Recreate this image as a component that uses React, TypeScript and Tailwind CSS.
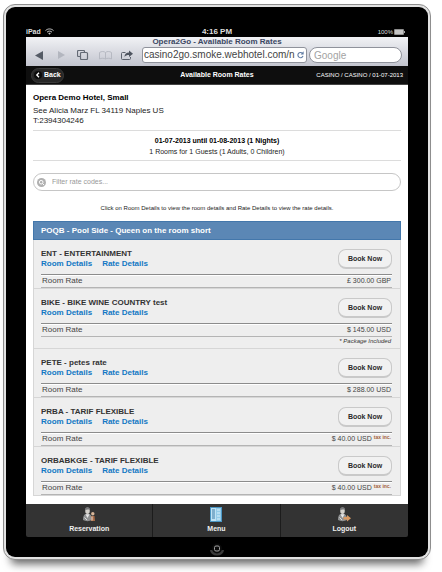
import React from "react";

type Rate = {
  code: string;
  price: string;
  taxIncluded?: boolean;
  note?: string;
};

const rates: Rate[] = [
  { code: "ENT - ENTERTAINMENT", price: "£ 300.00 GBP" },
  { code: "BIKE - BIKE WINE COUNTRY test", price: "$ 145.00 USD", note: "* Package Included" },
  { code: "PETE - petes rate", price: "$ 288.00 USD" },
  { code: "PRBA - TARIF FLEXIBLE", price: "$ 40.00 USD", taxIncluded: true },
  { code: "ORBABKGE - TARIF FLEXIBLE", price: "$ 40.00 USD", taxIncluded: true },
];

function WifiIcon() {
  return (
    <svg width="9" height="7" viewBox="0 0 18 14" fill="none" stroke="#c9c9c9" strokeWidth="2">
      <path d="M1 5.2C5.5.8 12.500.8 17 5.2" />
      <path d="M4 8.400c2.800-2.800 7.200-2.800 10 0" />
      <path d="M6.500 10.600c1.500-1.200 3.500-1.200 5 0L9 13.400z" fill="#c9c9c9" stroke="none" />
    </svg>
  );
}

function BatteryIcon() {
  return (
    <svg width="11" height="6" viewBox="0 0 11 6">
      <rect x="0" y="0" width="10" height="6" rx="1" fill="#8d8d8d" />
      <rect x="1" y="1" width="8" height="4" fill="#c4c4c4" />
      <rect x="10" y="2" width="1" height="2" fill="#a5a5a5" />
    </svg>
  );
}

function StatusBar() {
  return (
    <div className="grid h-[13px] grid-cols-3 items-center pt-[2px] text-[8px] leading-[10px] text-[#dedede]">
      <div className="flex items-center gap-1 text-[7px] font-bold">
        <span>iPad</span>
        <WifiIcon />
      </div>
      <div className="text-center font-bold">4:16 PM</div>
      <div className="flex items-center justify-end gap-px pr-[3px] text-[6px]">
        <span>100%</span>
        <BatteryIcon />
      </div>
    </div>
  );
}

const toolButton = "flex h-4 w-[22px] items-center justify-center";

function BrowserBar() {
  return (
    <div className="h-[29px] bg-linear-to-b from-[#f1f2f5] to-[#c3c5cf]">
      <div className="text-center text-[8px] leading-[10px] font-bold text-[#3b4763]">
        Opera2Go - Available Room Rates
      </div>
      <div className="flex items-center pr-[6px] pl-[2px]">
        <div className="flex w-[114px] shrink-0">
          <button type="button" aria-label="Go back" className={toolButton}>
            <svg width="8" height="9" viewBox="0 0 8 9">
              <path d="M8 0v9L0 4.500z" fill="#555b66" />
            </svg>
          </button>
          <button type="button" aria-label="Go forward" className={toolButton}>
            <svg width="7" height="8" viewBox="0 0 7 8">
              <path d="M0 0v8l7-4z" fill="#b3b6bf" />
            </svg>
          </button>
          <button type="button" aria-label="Pages" className={toolButton}>
            <svg width="12" height="10" viewBox="0 0 12 10" fill="none" stroke="#646a75">
              <path d="M3 6.500H1.500a1 1 0 0 1-1-1v-4a1 1 0 0 1 1-1h5a1 1 0 0 1 1 1V2" strokeWidth="1.200" />
              <rect x="3.500" y="2.500" width="7" height="7" rx="1" strokeWidth="1.200" />
            </svg>
          </button>
          <button type="button" aria-label="Bookmarks" className={toolButton}>
            <svg width="13" height="9" viewBox="0 0 13 9" fill="none" stroke="#b6b9c2">
              <path d="M.5 8V1.500C2.500.2 5 .2 6.500 1.500 8 .2 10.500.2 12.500 1.500V8C10.500 7 8 7 6.500 8 5 7 2.500 7 .5 8zM6.500 1.500V8" />
            </svg>
          </button>
          <button type="button" aria-label="Share" className={toolButton}>
            <svg width="12" height="10" viewBox="0 0 12 10">
              <path d="M4.500 2.500h-3a1 1 0 0 0-1 1v5a1 1 0 0 0 1 1h7a1 1 0 0 0 1-1V7" fill="none" stroke="#5b616c" />
              <path d="M3.500 7C3.500 4 5 2.500 8 2.500V.5L12 3.700 8 7V5C6 5 4.500 5.500 3.500 7z" fill="#4e545f" />
            </svg>
          </button>
        </div>
        <div className="grid min-w-0 flex-1 grid-cols-[165fr_93fr] gap-[2px]">
          <div className="flex h-4 min-w-0 items-center rounded-[3px] border border-[#8f929b] bg-white pr-[2px] pl-px">
            <input
              type="text"
              aria-label="Address"
              defaultValue="casino2go.smoke.webhotel.com/n"
              className="h-3 min-w-0 flex-1 bg-transparent text-[10px] leading-3 text-[#444444] outline-none"
            />
            <button type="button" aria-label="Reload">
              <svg width="7" height="8" viewBox="0 0 7 8">
                <path d="M5.500 2.400A2.600 2.600 0 1 0 6 4.800" fill="none" stroke="#5e7ba3" strokeWidth="1.100" />
                <path d="M6.600.3v3.100H3.600z" fill="#5e7ba3" />
              </svg>
            </button>
          </div>
          <input
            type="search"
            aria-label="Search the web"
            placeholder="Google"
            className="h-4 w-full min-w-0 rounded-full border border-[#8f929b] bg-white pr-1 pl-[4px] text-[10px] leading-3 outline-none placeholder:text-[#a3a3a3]"
          />
        </div>
      </div>
    </div>
  );
}

function AppHeader() {
  return (
    <header className="grid h-[19px] grid-cols-[1fr_auto_1fr] items-center border-b border-[#444444] bg-[#0e0e0e] px-[5px] text-white">
      <button
        type="button"
        className="flex h-[15px] w-[33px] items-center gap-[2px] rounded-full border border-[#3a3a3a] bg-[#272727] pl-[2px] text-[7px] leading-[10px] font-bold"
      >
        <svg width="8" height="8" viewBox="0 0 8 8">
          <circle cx="4" cy="4" r="4" fill="#0b0b0b" />
          <path d="M5 1.800 2.800 4 5 6.200" fill="none" stroke="#ffffff" strokeWidth="1.300" />
        </svg>
        Back
      </button>
      <h1 className="text-[7px] leading-[10px] font-bold">Available Room Rates</h1>
      <div className="text-right text-[6px] leading-[10px]">CASINO / CASINO / 01-07-2013</div>
    </header>
  );
}

function RateRow({ rate }: { rate: Rate }) {
  return (
    <li className="border-x border-b border-[#d6d6d6] bg-[#eeeeee] pr-[8px] pl-[7px]">
      <div className="flex items-start justify-between">
        <div className="pt-[9px] text-[8px] leading-[10px] font-bold">
          <h3 className="text-[#333333]">{rate.code}</h3>
          <div className="flex gap-[10px] text-[#1378c4]">
            <a href="#room">Room Details</a>
            <a href="#rate">Rate Details</a>
          </div>
        </div>
        <button
          type="button"
          className="mt-[9px] h-5 w-[54px] rounded-[8px] border border-b-2 border-[#c9c9c9] bg-[#f1f1f1] text-[7px] leading-[10px] font-bold text-[#2b2b2b]"
        >
          Book Now
        </button>
      </div>
      <div className="mt-[5px] border-t border-b border-t-[#8c8c8c] border-b-[#b4b4b4] shadow-[inset_0_1px_0_#ffffff]">
        <table className="w-full leading-3 text-[#444444]">
          <tbody>
            <tr>
              <th scope="row" className="pl-px text-left text-[8px] font-normal">
                Room Rate
              </th>
              <td className="flex justify-end gap-[2px] pr-px text-[7px]">
                {rate.price}
                {rate.taxIncluded && <span className="text-[5px] leading-[8px] font-bold text-[#a4623a]">tax inc.</span>}
              </td>
            </tr>
          </tbody>
        </table>
      </div>
      {rate.note && <p className="h-[11px] pr-px text-right text-[6px] leading-[8px] text-[#333333] italic">{rate.note}</p>}
    </li>
  );
}

function GuestFigure({ children }: { children: React.ReactNode }) {
  return (
    <svg width="14" height="15" viewBox="0 0 14 15">
      <path d="M1 13c0-4 1-5.500 3-6L7.500 7C9.500 8 10 10 10 13c-2.500 1.500-6.500 1.500-9 0z" fill="#8f9192" />
      <path d="M3.500 7.200 5.500 11l2-3.800z" fill="#e9e9e9" />
      <ellipse cx="5.500" cy="3.800" rx="2.300" ry="3.200" fill="#d5d2cc" />
      <path d="M3 3.500C3 1 4 .3 5.500.3S8 1 8 3C6.500 2.400 4.500 2.400 3 3.500z" fill="#77787a" />
      <path d="M2.500 10.500 5 13" stroke="#dddddd" />
      {children}
    </svg>
  );
}

function ReservationIcon() {
  return (
    <GuestFigure>
      <circle cx="10.800" cy="6.800" r="1.700" fill="#d9b79a" />
      <path d="M9 9h3.500l.5 5H9z" fill="#a96c48" />
      <path d="M10 9.500v4" stroke="#e6ded8" />
    </GuestFigure>
  );
}

function MenuIcon() {
  return (
    <svg width="12" height="15" viewBox="0 0 12 15">
      <rect x="0" y="0" width="12" height="15" fill="#4b96c4" />
      <rect x="1" y="1" width="10" height="13" fill="#bfe2f4" />
      <path d="M2 3h3M2 5h3M2 7h3M2 9h3M2 11h3" stroke="#3f7da8" />
      <path d="M6 1h5v13H6z" fill="#93cbe9" />
      <path d="M7 3h3M7 6h3M7 9h3M7 12h3" stroke="#d9f0fb" />
    </svg>
  );
}

function LogoutIcon() {
  return (
    <GuestFigure>
      <path d="M6.500 10h3.500V8l4 3.300-4 3.300v-2H6.500z" fill="#d99a63" />
    </GuestFigure>
  );
}

function FooterNav() {
  const items = [
    { label: "Reservation", icon: <ReservationIcon /> },
    { label: "Menu", icon: <MenuIcon /> },
    { label: "Logout", icon: <LogoutIcon /> },
  ];
  return (
    <nav className="grid grid-cols-3 divide-x divide-[#1c1c1c] rounded-b-[2px] bg-[#333333]">
      {items.map((item) => (
        <a
          key={item.label}
          href={"#" + item.label.toLowerCase()}
          className="flex h-[33px] flex-col items-center pt-[3px] text-[7px] leading-[10px] font-bold text-[#f0f0f0]"
        >
          {item.icon}
          <span className="mt-[2px]">{item.label}</span>
        </a>
      ))}
    </nav>
  );
}

export default function App() {
  return (
    <div className="bg-white pt-1 pr-[11px] pb-3 pl-[3px] font-['Liberation_Sans',Arial,sans-serif] text-black">
      <div className="rounded-[12px] border border-[#8e8e8e] bg-[#e2e2e2] p-[2px] shadow-[0_12px_8px_-8px_rgba(0,0,0,0.6)]">
        <div className="rounded-[9px] bg-black px-5 pt-[17px] pb-px">
          <StatusBar />
          <BrowserBar />
          <AppHeader />
          <main className="bg-white px-[7px] pt-[8px] pb-[8px]">
            <section className="border-b border-[#dcdcdc] pb-[4px] text-[8px] leading-[10px]">
              <h2 className="font-bold">Opera Demo Hotel, Small</h2>
              <address className="mt-[3px] text-[#222222] not-italic">
                <p>See Alicia Marz FL 34119 Naples US</p>
                <p>T:2394304246</p>
              </address>
            </section>
            <section className="border-b border-[#dcdcdc] pt-[4px] pb-[3px] text-center text-[7px] leading-[11px]">
              <p className="font-bold">01-07-2013 until 01-08-2013 (1 Nights)</p>
              <p className="text-[#222222]">1 Rooms for 1 Guests (1 Adults, 0 Children)</p>
            </section>
            <div className="mt-3 flex h-[18px] items-center gap-[6px] rounded-full border border-[#c6c6c6] pr-2 pl-[3px]">
              <svg width="9" height="9" viewBox="0 0 9 9">
                <circle cx="4.500" cy="4.500" r="4.500" fill="#b0b0b0" />
                <circle cx="4.200" cy="4.200" r="1.800" fill="none" stroke="#ffffff" />
                <path d="m5.500 5.500 1.700 1.700" stroke="#ffffff" />
              </svg>
              <input
                type="text"
                aria-label="Filter rate codes"
                placeholder="Filter rate codes..."
                className="h-3 min-w-0 flex-1 bg-transparent text-[7px] leading-3 outline-none placeholder:text-[#999999]"
              />
            </div>
            <p className="mt-3 text-center text-[6px] leading-[10px] text-[#222222]">
              Click on Room Details to view the room details and Rate Details to view the rate details.
            </p>
            <section className="mt-[8px]">
              <h2 className="h-[19px] border border-[#4377ab] bg-[#5b87b5] pl-[7px] text-[8px] leading-[17px] font-bold text-white">
                POQB - Pool Side - Queen on the room short
              </h2>
              <ul>
                {rates.map((rate) => (
                  <RateRow key={rate.code} rate={rate} />
                ))}
              </ul>
            </section>
          </main>
          <FooterNav />
          <div className="flex justify-center pt-[5px]">
            <button type="button" aria-label="Home">
              <svg width="16" height="14" viewBox="0 0 16 14" fill="none">
                <path d="M1 8a7 5.500 0 0 0 14 0" fill="#3a3a3a" />
                <circle cx="8" cy="6.500" r="5" fill="#0a0a0a" />
                <rect x="5.500" y="4" width="5" height="5" rx="1.500" stroke="#a0a0a0" />
              </svg>
            </button>
          </div>
        </div>
      </div>
    </div>
  );
}
